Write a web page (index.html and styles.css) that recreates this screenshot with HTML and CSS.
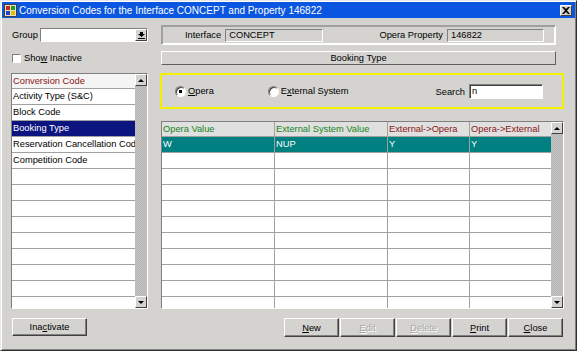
FILE: index.html
```html
<!DOCTYPE html>
<html lang="en">
<head>
  <meta charset="UTF-8" />
  <title>Conversion Codes</title>
  <link rel="stylesheet" href="styles.css">
</head>
<body>
  <div class="window">
    <div class="titlebar">
      <svg class="app-icon" width="13" height="13" viewBox="0 0 13 13">
        <rect x="0.5" y="0.5" width="12" height="12" fill="#e8e0c0" stroke="#404040"/>
        <rect x="2" y="2" width="4" height="4" fill="#d02020"/>
        <rect x="7" y="2" width="4" height="4" fill="#20a020"/>
        <rect x="2" y="7" width="4" height="4" fill="#2040d0"/>
        <rect x="7" y="7" width="4" height="4" fill="#e0c000"/>
      </svg>
      <span class="title">Conversion Codes for the Interface CONCEPT and Property 146822</span>
      <span class="close-btn">
        <svg width="8" height="7" viewBox="0 0 8 7"><path d="M0 0h2l2 2 2-2h2L5 3.5 8 7H6L4 5 2 7H0l3-3.5z" fill="#000"/></svg>
      </span>
    </div>

    <div class="content">
      <div class="top">
        <div class="top-left">
          <div class="group-row">
            <span class="label">Group</span>
            <div class="combo">
              <span class="combo-field"></span>
              <span class="combo-btn">
                <svg width="7" height="7" viewBox="0 0 7 7"><path d="M2 0h3v2h2L3.5 5 0 2h2z" fill="#000"/><rect x="0" y="6" width="7" height="1" fill="#000"/></svg>
              </span>
            </div>
          </div>
          <div class="check-row">
            <span class="checkbox"></span>
            <span>Sho<u>w</u> Inactive</span>
          </div>
        </div>
        <div class="top-right">
          <div class="groove">
            <span class="label">Interface</span>
            <span class="field field-wide">CONCEPT</span>
            <span class="label push">Opera Property</span>
            <span class="field field-prop">146822</span>
          </div>
          <div class="booking">Booking Type</div>
        </div>
      </div>

      <div class="main">
        <div class="list">
          <div class="list-rows">
            <div class="list-head">Conversion Code</div>
            <div class="list-row">Activity Type (S&amp;C)</div>
            <div class="list-row">Block Code</div>
            <div class="list-row selected">Booking Type</div>
            <div class="list-row">Reservation Cancellation Code</div>
            <div class="list-row">Competition Code</div>
            <div class="list-row"></div>
            <div class="list-row"></div>
            <div class="list-row"></div>
            <div class="list-row"></div>
            <div class="list-row"></div>
            <div class="list-row"></div>
            <div class="list-row"></div>
            <div class="list-row"></div>
            <div class="list-row"></div>
            <div class="list-row"></div>
          </div>
          <div class="scrollbar">
            <span class="sb-btn"><span class="arrow-up"></span></span>
            <span class="sb-track"></span>
            <span class="sb-btn"><span class="arrow-down"></span></span>
          </div>
        </div>

        <div class="right-main">
          <div class="filter">
            <span class="radio checked"></span>
            <span class="radio-label"><u>O</u>pera</span>
            <span class="radio second"></span>
            <span class="radio-label">E<u>x</u>ternal System</span>
            <span class="label search-label">Search</span>
            <span class="search-input">n</span>
          </div>

          <div class="grid">
            <div class="grid-body">
              <div class="grid-row grid-head">
                <span class="c1 green">Opera Value</span>
                <span class="c2 green">External System Value</span>
                <span class="c3 red">External-&gt;Opera</span>
                <span class="c4 red">Opera-&gt;External</span>
              </div>
              <div class="grid-row current">
                <span class="c1">W</span><span class="c2">NUP</span><span class="c3">Y</span><span class="c4">Y</span>
              </div>
              <div class="grid-row"><span class="c1"></span><span class="c2"></span><span class="c3"></span><span class="c4"></span></div>
              <div class="grid-row"><span class="c1"></span><span class="c2"></span><span class="c3"></span><span class="c4"></span></div>
              <div class="grid-row"><span class="c1"></span><span class="c2"></span><span class="c3"></span><span class="c4"></span></div>
              <div class="grid-row"><span class="c1"></span><span class="c2"></span><span class="c3"></span><span class="c4"></span></div>
              <div class="grid-row"><span class="c1"></span><span class="c2"></span><span class="c3"></span><span class="c4"></span></div>
              <div class="grid-row"><span class="c1"></span><span class="c2"></span><span class="c3"></span><span class="c4"></span></div>
              <div class="grid-row"><span class="c1"></span><span class="c2"></span><span class="c3"></span><span class="c4"></span></div>
              <div class="grid-row"><span class="c1"></span><span class="c2"></span><span class="c3"></span><span class="c4"></span></div>
              <div class="grid-row"><span class="c1"></span><span class="c2"></span><span class="c3"></span><span class="c4"></span></div>
              <div class="grid-row"><span class="c1"></span><span class="c2"></span><span class="c3"></span><span class="c4"></span></div>
            </div>
            <div class="scrollbar">
              <span class="sb-btn"><span class="arrow-up"></span></span>
              <span class="sb-track"></span>
              <span class="sb-btn"><span class="arrow-down"></span></span>
            </div>
          </div>
        </div>
      </div>

      <div class="bottom">
        <span class="btn btn-inactivate">Ina<u>c</u>tivate</span>
        <div class="btn-group">
          <span class="btn"><u>N</u>ew</span>
          <span class="btn disabled"><u>E</u>dit</span>
          <span class="btn disabled"><u>D</u>elete</span>
          <span class="btn"><u>P</u>rint</span>
          <span class="btn"><u>C</u>lose</span>
        </div>
      </div>
    </div>
  </div>
</body>
</html>
```

FILE: styles.css
```css
* {
  box-sizing: border-box;
}

body {
  margin: 0;
  font-family: "Liberation Sans", Arial, sans-serif;
  font-size: 9.3px;
  color: #000;
  background: #d4d3d0;
}

.window {
  width: 577px;
  height: 351px;
  padding: 1px;
  background: #d4d3d0;
  border: 1px solid;
  border-color: #e8e8e8 #303030 #303030 #e8e8e8;
  box-shadow: inset 1px 1px #fff, inset -1px -1px #808080;
}

/* title bar */
.titlebar {
  display: flex;
  align-items: center;
  height: 16px;
  padding: 0 3px 0 2px;
  background: #0a56e0;
  color: #fff;
}

.app-icon {
  margin-right: 2px;
}

.title {
  font-size: 10px;
  flex: 1;
}

.close-btn {
  display: flex;
  align-items: center;
  justify-content: center;
  width: 12px;
  height: 11px;
  background: #d4d3d0;
  border: 1px solid;
  border-color: #fff #404040 #404040 #fff;
}

.content {
  padding: 7px 11px 0 8px;
}

.label {
  white-space: nowrap;
}

/* top area */
.top {
  display: grid;
  grid-template-columns: 138px 1fr;
  column-gap: 12px;
}

.top-left {
  padding-left: 2px;
}

.group-row {
  display: flex;
  align-items: center;
  height: 20px;
}

.group-row .label {
  width: 28px;
}

.combo {
  display: flex;
  width: 108px;
  height: 14px;
  background: #fff;
  border: 1px solid;
  border-color: #808080 #fff #fff #808080;
}

.combo-field {
  flex: 1;
}

.combo-btn {
  display: flex;
  align-items: center;
  justify-content: center;
  width: 12px;
  background: #d4d3d0;
  border: 1px solid;
  border-color: #fff #404040 #404040 #fff;
}

.check-row {
  display: flex;
  align-items: center;
  gap: 3px;
  margin-top: 6px;
  height: 14px;
}

.checkbox {
  width: 9px;
  height: 9px;
  background: #fff;
  border: 1px solid;
  border-color: #808080 #fff #fff #808080;
}

.top-right {
  padding-left: 1px;
  width: 396px;
}

.groove {
  display: flex;
  align-items: center;
  height: 20px;
  padding: 0 11px 0 23px;
  border: 1px solid;
  border-color: #a0a0a0 #fff #fff #a0a0a0;
  box-shadow: 1px 1px 0 #a0a0a0 inset, -1px -1px 0 #fff inset;
}

.field {
  height: 13px;
  padding: 0 3px;
  line-height: 11px;
  margin-left: 4px;
  border: 1px solid;
  border-color: #808080 #fff #fff #808080;
}

.field-wide {
  width: 98px;
}

.field-prop {
  width: 97px;
}

.push {
  margin-left: auto;
}

.booking {
  margin-top: 6px;
  height: 14px;
  line-height: 12px;
  text-align: center;
  border: 1px solid;
  border-color: #fff #606060 #606060 #fff;
}

/* main area */
.main {
  display: grid;
  grid-template-columns: 138px 1fr;
  column-gap: 12px;
  margin-top: 8px;
  height: 236px;
}

.list {
  display: flex;
  overflow: hidden;
  border: 1px solid;
  border-color: #808080 #fff #fff #808080;
  margin-left: 1px;
}

.list-rows {
  flex: 1;
  overflow: hidden;
  background: #fff;
}

.list-head,
.list-row {
  height: 16px;
  line-height: 15px;
  padding-left: 1px;
  white-space: nowrap;
  overflow: hidden;
  border-bottom: 1px solid #a0a0a0;
}

.list-head {
  height: 15px;
  color: #8b1414;
  background: #f4f4f4;
}

.list-row.selected {
  background: #0c1480;
  color: #fff;
}

.scrollbar {
  display: flex;
  flex-direction: column;
  width: 12px;
}

.sb-btn {
  display: flex;
  align-items: center;
  justify-content: center;
  height: 12px;
  background: #d4d3d0;
  border: 1px solid;
  border-color: #fff #404040 #404040 #fff;
}

.sb-track {
  flex: 1;
  background: repeating-conic-gradient(#b4b4b4 0 25%, #c4c4c4 0 50%) 0 0 / 2px 2px;
}

.arrow-up,
.arrow-down {
  width: 0;
  height: 0;
  border-left: 3px solid transparent;
  border-right: 3px solid transparent;
}

.arrow-up {
  border-bottom: 3px solid #000;
}

.arrow-down {
  border-top: 3px solid #000;
}

.right-main {
  display: flex;
  flex-direction: column;
}

.filter {
  display: flex;
  align-items: center;
  height: 36px;
  padding: 0 19px 0 13px;
  border: 2px solid #f2f200;
}

.radio {
  width: 11px;
  height: 11px;
  border-radius: 50%;
  background: #fff;
  border: 1px solid;
  border-color: #808080 #fff #fff #808080;
  box-shadow: inset 1px 1px #404040;
}

.radio.checked {
  background: radial-gradient(circle, #000 0 1.6px, #fff 2px);
}

.radio.second {
  margin-left: 54px;
}

.radio-label {
  margin-left: 2px;
}

.search-label {
  margin-left: auto;
  margin-right: 4px;
  padding-top: 2px;
}

.search-input {
  width: 74px;
  height: 15px;
  padding-left: 2px;
  line-height: 12px;
  background: #fff;
  border: 1px solid;
  border-color: #808080 #fff #fff #808080;
  box-shadow: inset 1px 1px #404040;
}

.grid {
  display: flex;
  margin-top: 12px;
  margin-left: 1px;
  width: 403px;
  height: 188px;
  overflow: hidden;
  border: 1px solid;
  border-color: #808080 #fff #fff #808080;
}

.grid-body {
  flex: 1;
  overflow: hidden;
  background: #fff;
}

.grid-row {
  display: flex;
  height: 16px;
  line-height: 15px;
  border-bottom: 1px solid #a0a0a0;
}

.grid-row span {
  padding-left: 1px;
  border-right: 1px solid #a0a0a0;
  white-space: nowrap;
  overflow: hidden;
}

.grid-row .c1 { width: 113px; }
.grid-row .c2 { width: 113px; }
.grid-row .c3 { width: 82px; }
.grid-row .c4 { flex: 1; border-right: 0; }

.grid-head {
  height: 15px;
  line-height: 14px;
  background: #e0e0e0;
}

.green {
  color: #14841a;
}

.red {
  color: #8b1414;
}

.grid-row.current {
  background: #008080;
  color: #fff;
}

/* bottom buttons */
.bottom {
  display: flex;
  justify-content: space-between;
  margin-top: 9px;
  padding: 0 1px 0 2px;
}

.btn {
  display: flex;
  align-items: center;
  justify-content: center;
  width: 55px;
  height: 19px;
  border: 1px solid;
  border-color: #fff #404040 #404040 #fff;
  box-shadow: inset -1px -1px #808080;
}

.btn-inactivate {
  width: 75px;
  height: 18px;
}

.btn-group {
  display: flex;
  gap: 1px;
}

.btn.disabled {
  color: #a8a8a8;
  text-shadow: 1px 1px #fff;
}
```
